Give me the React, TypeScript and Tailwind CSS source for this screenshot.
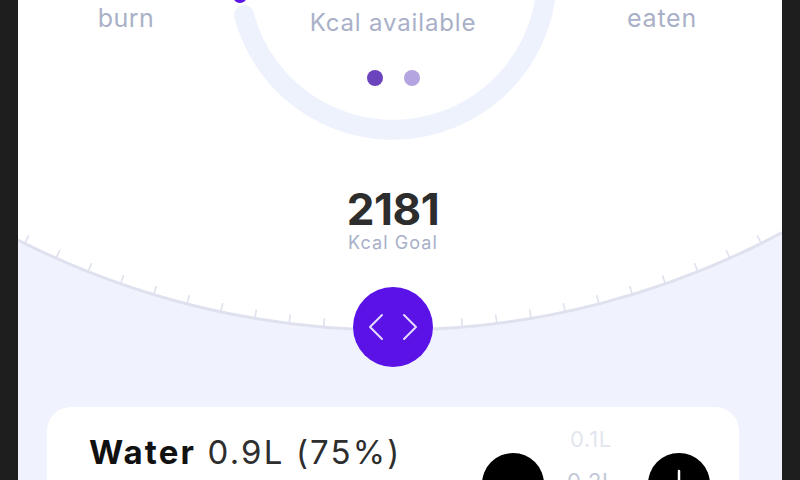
import React from 'react';

const font = { fontFamily: 'Inter, "Noto Sans", sans-serif' };

// big goal dial: circle centre (375,-656) in section coords, radius 826
const CX = 375;
const CY = -656;
const R = 826;
const STEP = 0.042;

function GoalDial() {
  const ticks: { x1: number; y1: number; x2: number; y2: number }[] = [];
  for (let k = -11; k <= 11; k++) {
    if (Math.abs(k) < 2) continue;
    const a = k * STEP;
    ticks.push({
      x1: CX + R * Math.sin(a),
      y1: CY + R * Math.cos(a),
      x2: CX + (R - 9) * Math.sin(a),
      y2: CY + (R - 9) * Math.cos(a),
    });
  }
  const yl = CY + Math.sqrt(R * R - CX * CX);
  const yr = CY + Math.sqrt(R * R - (764 - CX) * (764 - CX));
  return (
    <svg className="absolute inset-0" width="764" height="210" viewBox="0 0 764 210">
      <path d={`M0 0 L0 ${yl} A${R} ${R} 0 0 0 764 ${yr} L764 0 Z`} fill="#ffffff" />
      <path d={`M0 ${yl} A${R} ${R} 0 0 0 764 ${yr}`} fill="none" stroke="#dfe2ee" strokeWidth="3" />
      {ticks.map((t, i) => (
        <line key={i} x1={t.x1} y1={t.y1} x2={t.x2} y2={t.y2} stroke="#dfe2ee" strokeWidth="1.6" />
      ))}
    </svg>
  );
}

function Ring() {
  // ring centre (165,-24), radius 154
  const cx = 165;
  const cy = -24;
  const r = 154;
  const end = -20 * (Math.PI / 180);
  const ex = cx + r * Math.cos(end);
  const ey = cy + r * Math.sin(end);
  return (
    <svg className="absolute inset-0 overflow-visible" width="330" height="160" viewBox="0 0 330 160">
      <path
        d={`M16 15 A${r} ${r} 0 1 0 ${ex} ${ey}`}
        fill="none"
        stroke="#eef2fc"
        strokeWidth="20"
        strokeLinecap="round"
      />
      <circle cx="12" cy="-4" r="7" fill="#5a12e6" />
    </svg>
  );
}

export default function App() {
  return (
    <div className="w-[800px] h-[480px] overflow-hidden bg-[#1e1e1e] px-[18px]" style={font}>
      <div className="h-full bg-[#f0f3fd] flex flex-col">
        {/* top summary */}
        <div className="h-[160px] shrink-0 bg-white grid grid-cols-[1fr_330px_1fr] pr-[14px]">
          <div className="flex justify-center pt-[6px] pl-[6px]">
            <span className="text-[25px] leading-none text-[#a9b0c8] tracking-[0.02em]">burn</span>
          </div>
          <div className="relative flex flex-col items-center pt-[11px]">
            <Ring />
            <span className="relative text-[24px] leading-none text-[#a9b0c8] tracking-[0.035em]">Kcal available</span>
            <div className="relative flex gap-[21px] mt-[35px]">
              <span className="w-[16px] h-[16px] rounded-full bg-[#6a43bd]" />
              <span className="w-[16px] h-[16px] rounded-full bg-[#b4a4df]" />
            </div>
          </div>
          <div className="flex justify-center pt-[6px] pr-[2px]">
            <span className="text-[25px] leading-none text-[#a9b0c8] tracking-[0.03em]">eaten</span>
          </div>
        </div>

        {/* goal dial */}
        <div className="relative h-[206px] shrink-0 flex flex-col items-center pr-[14px]">
          <GoalDial />
          <span className="relative mt-[27px] text-[44px] leading-none font-bold text-[#2d2d2d] tracking-[-0.01em]">2181</span>
          <span className="relative mt-[3px] text-[18px] leading-none text-[#a8afc8] tracking-[0.06em]">Kcal Goal</span>
          <button className="relative mt-[35px] w-[80px] h-[80px] rounded-full bg-[#5a12e6] flex items-center justify-center">
            <svg width="80" height="80" viewBox="0 0 80 80" fill="none" stroke="#e6dbff" strokeWidth="2" strokeLinecap="round" strokeLinejoin="round">
              <polyline points="29,28 17,40 29,52" />
              <polyline points="51,28 63,40 51,52" />
            </svg>
          </button>
        </div>

        {/* water card */}
        <div className="pt-[41px] pl-[29px] pr-[43px]">
          <div className="bg-white rounded-[24px] h-[140px] flex items-start pl-[42px] pr-[29px]">
            <div className="mt-[29px] text-[33px] leading-none text-[#111111] tracking-[0.065em] whitespace-nowrap">
              <span className="font-bold">Water</span>
              <span className="text-[#2e2e2e]"> 0.9L (75%)</span>
            </div>
            <div className="ml-auto flex items-start">
              <div className="mt-[46px] w-[62px] h-[62px] rounded-full bg-black flex items-center justify-center">
                <svg width="62" height="62" viewBox="0 0 62 62" stroke="#ffffff" strokeWidth="2.5" strokeLinecap="round">
                  <line x1="18" y1="31" x2="44" y2="31" />
                </svg>
              </div>
              <div className="w-[104px] mt-[21px] flex flex-col items-center gap-[20px] text-[22px] leading-none pr-[10px] tracking-[0.03em]">
                <span className="text-[#e3e6ef]">0.1L</span>
                <span className="text-[#c3c8d9]">0.2L</span>
              </div>
              <div className="mt-[46px] w-[62px] h-[62px] rounded-full bg-black flex items-center justify-center">
                <svg width="62" height="62" viewBox="0 0 62 62" stroke="#ffffff" strokeWidth="2.5" strokeLinecap="round">
                  <line x1="31" y1="18" x2="31" y2="44" />
                  <line x1="18" y1="31" x2="44" y2="31" />
                </svg>
              </div>
            </div>
          </div>
        </div>
      </div>
    </div>
  );
}
